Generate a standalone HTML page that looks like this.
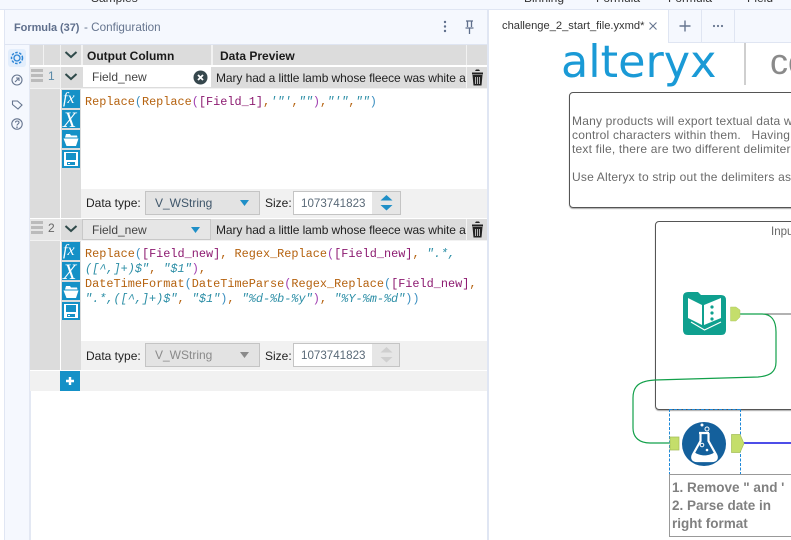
<!DOCTYPE html>
<html><head><meta charset="utf-8"><style>
html,body{margin:0;padding:0;width:791px;height:540px;overflow:hidden;background:#fff;font-family:"Liberation Sans",sans-serif}
.a{position:absolute}
.t{position:absolute;white-space:nowrap;font-size:12px;line-height:16px;color:#333}
.code{position:absolute;white-space:pre;font-family:"Liberation Mono",monospace;font-size:11.87px;line-height:15px;left:85px;color:#b5620f}
.code i{color:#2c8ea6}.code b{font-weight:normal;color:#8c1a70}.code u{text-decoration:none;color:#3b8fc0}.code s{text-decoration:none;color:#a03fb0}
.ib{position:absolute;left:62px;width:18px;height:18px;background:#1591c7}
.bar{position:absolute;left:31px;width:12px;height:3px;background:#bbb}
.fx{position:absolute;left:63px;white-space:nowrap;font:italic 16px/18px "Liberation Serif",serif;color:#fff}
.xx{position:absolute;left:63px;white-space:nowrap;font:italic 22px/19px "Liberation Serif",serif;color:#fff}
</style></head><body>
<div class="a" style="left:0;top:0;width:791px;height:9px;background:#f5f8fe;overflow:hidden">
<div class="t" style="left:91px;top:-10px">Samples</div><div class="t" style="left:524px;top:-10px">Binning</div><div class="t" style="left:596px;top:-10px">Formula</div><div class="t" style="left:668px;top:-10px">Formula</div><div class="t" style="left:747px;top:-10px">Field</div></div>
<div class="a" style="left:0;top:9px;width:791px;height:1px;background:#e0e6f3"></div>
<div class="a" style="left:4px;top:10px;width:1px;height:530px;background:#e0e6f3"></div>
<div class="a" style="left:5px;top:10px;width:482px;height:34px;background:#f5f8fe"></div>
<div class="a" style="left:5px;top:44px;width:482px;height:1px;background:#dfe5f2"></div>
<div class="a" style="left:5px;top:45px;width:24px;height:495px;background:#f5f8fe"></div>
<div class="a" style="left:29px;top:45px;width:1px;height:495px;background:#e3e8f3"></div>
<div class="a" style="left:487px;top:10px;width:2px;height:530px;background:#e0e6f3"></div>
<div class="t" style="left:14px;top:20px;font-weight:bold;font-size:11px;letter-spacing:-.05px;color:#5f6f8c">Formula (37)</div>
<div class="t" style="left:84px;top:20px;color:#66758f;font-size:11.7px">- Configuration</div>
<svg class="a" style="left:440px;top:18px" width="40" height="18"><g fill="#5f6f8c"><circle cx="5" cy="4" r="1.2"/><circle cx="5" cy="8.500" r="1.2"/><circle cx="5" cy="13" r="1.2"/></g><path d="M26 3h7M27.500 3v6M31.500 3v6M25.500 10h8M29.500 10v6" stroke="#5f6f8c" stroke-width="1.300" fill="none"/></svg>
<div class="a" style="left:8px;top:49px;width:18px;height:18px;background:#e3eefc;border-radius:3px"></div>
<svg class="a" style="left:8px;top:49px" width="18" height="90" fill="none"><circle cx="9" cy="9" r="3" stroke="#2e86d6" stroke-width="1.300"/><circle cx="9" cy="9" r="5.500" stroke="#2e86d6" stroke-width="1.500" stroke-dasharray="2.500 1.500"/>
<g stroke="#66758f" stroke-width="1.100"><circle cx="9" cy="31" r="5"/><path d="M7 33l4-4M8 29h3v3"/><path d="M4.500 52h5l4.500 4-4 4-5.500-4.500z"/><circle cx="9" cy="75" r="5.200"/><path d="M7.500 73.500c0-2 3.500-2 3.500 0 0 1.500-2 1.300-2 3"/></g><circle cx="9" cy="78.200" r=".8" fill="#66758f"/></svg>

<!-- grid -->
<div class="a" style="left:30px;top:45px;width:457px;height:20px;background:#dcdcdc"></div>
<div class="a" style="left:43px;top:45px;width:1px;height:20px;background:#f2f2f2"></div>
<div class="a" style="left:60px;top:45px;width:1px;height:20px;background:#f2f2f2"></div>
<div class="a" style="left:81px;top:45px;width:2px;height:20px;background:#f2f2f2"></div>
<div class="a" style="left:211px;top:45px;width:2px;height:20px;background:#f2f2f2"></div>
<div class="a" style="left:466px;top:45px;width:1px;height:20px;background:#f2f2f2"></div>
<div class="t" style="left:87px;top:48px;font-weight:bold;font-size:12px;color:#1a1a1a">Output Column</div>
<div class="t" style="left:220px;top:48px;font-weight:bold;font-size:12px;color:#1a1a1a">Data Preview</div>
<svg class="a" style="left:61px;top:50px" width="20" height="10"><path d="M4.500 2l5.500 5 5.500-5" stroke="#2f4a4a" stroke-width="2" fill="none"/></svg>

<!-- row1 -->
<div class="a" style="left:30px;top:67px;width:457px;height:21px;background:#dcdcdc"></div>
<div class="a" style="left:30px;top:67px;width:30px;height:21px;background:#e6e6e6"></div>
<div class="bar" style="top:69px"></div><div class="bar" style="top:74px"></div><div class="bar" style="top:79px"></div>
<div class="t" style="left:48px;top:68px;color:#5a8aa8">1</div>
<div class="a" style="left:60px;top:67px;width:1px;height:21px;background:#f2f2f2"></div>
<svg class="a" style="left:61px;top:72px" width="20" height="10"><path d="M4.500 2l5.500 5 5.500-5" stroke="#2f4a4a" stroke-width="2" fill="none"/></svg>
<div class="a" style="left:83px;top:67px;width:128px;height:20px;background:#fff"></div>
<div class="t" style="left:92px;top:69px;color:#444;font-size:12px">Field_new</div>
<svg class="a" style="left:193px;top:70px" width="15" height="15"><circle cx="7.500" cy="7.500" r="7" fill="#36474d"/><path d="M5 5l5 5M10 5l-5 5" stroke="#fff" stroke-width="1.800"/></svg>
<div class="t pv" style="left:216px;top:70px;color:#222;width:250px;overflow:hidden;font-size:12px;letter-spacing:-.08px">Mary had a little lamb whose fleece was white a</div>
<div class="a" style="left:466px;top:67px;width:1px;height:21px;background:#f2f2f2"></div>
<svg class="a" style="left:470px;top:68px" width="15" height="19" fill="#222"><path d="M2 4.500h11v2H2zM5 3l1-1.500h3L10 3z"/><path d="M2.500 7h10l-1 10.500h-8z"/><path d="M5.500 9v7M7.500 9v7M9.500 9v7" stroke="#dcdcdc" stroke-width=".8"/></svg>
<div class="a" style="left:30px;top:88px;width:457px;height:1px;background:#f2f2f2"></div>
<div class="a" style="left:30px;top:89px;width:30px;height:129px;background:#dcdcdc"></div>
<div class="a" style="left:61px;top:89px;width:20px;height:129px;background:#dcdcdc"></div>
<div class="a" style="left:81px;top:189px;width:406px;height:29px;background:#f1f1f1"></div>
<div class="code" style="top:95px">Replace<u>(</u>Replace<s>(</s><b>[Field_1]</b>,<i>'"'</i>,<i>""</i><s>)</s>,<i>"'"</i>,<i>""</i><u>)</u></div>
<div class="t" style="left:86px;top:195px;font-size:12px;color:#222">Data type:</div>
<div class="a" style="left:145px;top:191px;width:113px;height:22px;background:#e3e3e3;border:1px solid #c4c4c4"></div>
<div class="t" style="left:155px;top:195px;color:#3f566a">V_WString</div>
<svg class="a" style="left:239px;top:200px" width="12" height="7"><path d="M1 0h9l-4.500 6z" fill="#1f8fc7"/></svg>
<div class="t" style="left:265px;top:195px;color:#222">Size:</div>
<div class="a" style="left:293px;top:191px;width:106px;height:22px;background:#e6e6e6;border:1px solid #c4c4c4"></div>
<div class="a" style="left:294px;top:192px;width:78px;height:22px;background:#fff"></div>
<div class="t" style="left:301px;top:196px;color:#5a6a78;font-size:11.6px">1073741823</div>
<svg class="a" style="left:379px;top:194px" width="16" height="18"><path d="M1.500 6.500L7.500 1l6 5.500z" fill="#1f8fc7"/><path d="M1.500 11h12l-6 5.500z" fill="#1f8fc7"/></svg>

<!-- row2 -->
<div class="a" style="left:30px;top:219px;width:457px;height:21px;background:#dcdcdc"></div>
<div class="a" style="left:30px;top:219px;width:30px;height:21px;background:#e6e6e6"></div>
<div class="bar" style="top:221px"></div><div class="bar" style="top:226px"></div><div class="bar" style="top:231px"></div>
<div class="t" style="left:48px;top:220px;color:#666">2</div>
<div class="a" style="left:60px;top:219px;width:1px;height:21px;background:#f2f2f2"></div>
<svg class="a" style="left:61px;top:224px" width="20" height="10"><path d="M4.500 2l5.500 5 5.500-5" stroke="#2f4a4a" stroke-width="2" fill="none"/></svg>
<div class="a" style="left:82px;top:219px;width:127px;height:19px;background:#e6e6e6;border:1px solid #c8c8c8"></div>
<div class="t" style="left:92px;top:222px;color:#444">Field_new</div>
<svg class="a" style="left:190px;top:227px" width="12" height="7"><path d="M1 0h9l-4.500 6z" fill="#1f8fc7"/></svg>
<div class="t pv" style="left:216px;top:222px;color:#222;width:250px;overflow:hidden;letter-spacing:-.08px">Mary had a little lamb whose fleece was white a</div>
<div class="a" style="left:466px;top:219px;width:1px;height:21px;background:#f2f2f2"></div>
<svg class="a" style="left:470px;top:220px" width="15" height="19" fill="#222"><path d="M2 4.500h11v2H2zM5 3l1-1.500h3L10 3z"/><path d="M2.500 7h10l-1 10.500h-8z"/><path d="M5.500 9v7M7.500 9v7M9.500 9v7" stroke="#dcdcdc" stroke-width=".8"/></svg>
<div class="a" style="left:30px;top:240px;width:457px;height:1px;background:#f2f2f2"></div>
<div class="a" style="left:30px;top:241px;width:30px;height:129px;background:#dcdcdc"></div>
<div class="a" style="left:61px;top:241px;width:20px;height:129px;background:#dcdcdc"></div>
<div class="a" style="left:81px;top:341px;width:406px;height:29px;background:#f1f1f1"></div>
<div class="code" style="top:247px">Replace<u>(</u><b>[Field_new]</b>, Regex_Replace<s>(</s><b>[Field_new]</b>, <i>".*,</i>
<i>([^,]+)$"</i>, <i>"$1"</i><s>)</s>,
DateTimeFormat<u>(</u>DateTimeParse<s>(</s>Regex_Replace<u>(</u><b>[Field_new]</b>,
<i>".*,([^,]+)$"</i>, <i>"$1"</i><u>)</u>, <i>"%d-%b-%y"</i><s>)</s>, <i>"%Y-%m-%d"</i><u>))</u></div>
<div class="t" style="left:86px;top:348px;color:#222">Data type:</div>
<div class="a" style="left:145px;top:343px;width:113px;height:22px;background:#e3e3e3;border:1px solid #c4c4c4"></div>
<div class="t" style="left:155px;top:347px;color:#8a8a8a">V_WString</div>
<svg class="a" style="left:239px;top:352px" width="12" height="7"><path d="M1 0h9l-4.500 6z" fill="#8a8a8a"/></svg>
<div class="t" style="left:265px;top:348px;color:#222">Size:</div>
<div class="a" style="left:293px;top:343px;width:105px;height:22px;background:#e6e6e6;border:1px solid #c4c4c4"></div>
<div class="a" style="left:294px;top:344px;width:78px;height:22px;background:#fff"></div>
<div class="t" style="left:301px;top:348px;color:#5a6a78;font-size:11.6px">1073741823</div>
<svg class="a" style="left:379px;top:346px" width="16" height="18"><path d="M1.500 6.500L7.500 1l6 5.500z" fill="#cfcfcf"/><path d="M1.500 11h12l-6 5.500z" fill="#cfcfcf"/></svg>

<div class="a" style="left:30px;top:371px;width:457px;height:20px;background:#f1f1f1"></div>
<div class="a" style="left:60px;top:371px;width:20px;height:20px;background:#1591c7"></div>
<svg class="a" style="left:60px;top:371px" width="20" height="20"><path d="M10 6v8M6 10h8" stroke="#fff" stroke-width="2.400"/></svg>
<div class="a" style="left:30px;top:391px;width:1px;height:149px;background:#e3e8f3"></div>

<!-- icon buttons -->
<div class="ib" style="top:90px"></div><div class="ib" style="top:110px"></div><div class="ib" style="top:130px"></div><div class="ib" style="top:150px"></div>
<div class="ib" style="top:242px"></div><div class="ib" style="top:262px"></div><div class="ib" style="top:282px"></div><div class="ib" style="top:302px"></div>
<div class="fx" style="top:90px">fx</div>
<div class="fx" style="top:242px">fx</div>
<div class="xx" style="top:110px">X</div>
<div class="xx" style="top:262px">X</div>
<svg class="a" style="left:62px;top:130px" width="18" height="18"><path d="M3 7.500L4 4h4l1 1.500h6l.5 2zM1.500 8.500h15L14 16H4.500z" fill="#fff"/></svg>
<svg class="a" style="left:62px;top:282px" width="18" height="18"><path d="M3 7.500L4 4h4l1 1.500h6l.5 2zM1.500 8.500h15L14 16H4.500z" fill="#fff"/></svg>
<svg class="a" style="left:62px;top:150px" width="18" height="18"><path d="M2 2h14v14H2z" fill="#fff"/><path d="M4 3h10v7H4z" fill="#1591c7"/><path d="M5 12h8v3H5z" fill="#1591c7"/><path d="M6 13h2v1H6z" fill="#fff"/></svg>
<svg class="a" style="left:62px;top:302px" width="18" height="18"><path d="M2 2h14v14H2z" fill="#fff"/><path d="M4 3h10v7H4z" fill="#1591c7"/><path d="M5 12h8v3H5z" fill="#1591c7"/><path d="M6 13h2v1H6z" fill="#fff"/></svg>

<!-- tabs -->
<div class="t" style="left:502px;top:18px;font-size:11.15px;color:#333">challenge_2_start_file.yxmd*</div>
<svg class="a" style="left:648px;top:21px" width="10" height="10"><path d="M1.500 1.500l7 7M8.500 1.500l-7 7" stroke="#66758f" stroke-width="1.100"/></svg>
<div class="a" style="left:668px;top:10px;width:123px;height:33px;background:#f5f8fe"></div>
<div class="a" style="left:668px;top:10px;width:1px;height:33px;background:#dfe5f2"></div>
<div class="a" style="left:701px;top:10px;width:1px;height:33px;background:#dfe5f2"></div>
<div class="a" style="left:734px;top:10px;width:1px;height:33px;background:#dfe5f2"></div>
<div class="a" style="left:668px;top:42px;width:123px;height:1px;background:#dfe5f2"></div>
<svg class="a" style="left:675px;top:18px" width="60" height="16"><path d="M10 2.500v11M4.500 8h11" stroke="#66758f" stroke-width="1.400"/><g fill="#66758f"><circle cx="39" cy="8" r="1.100"/><circle cx="43" cy="8" r="1.100"/><circle cx="47" cy="8" r="1.100"/></g></svg>

<!-- canvas -->
<div class="t" style="left:561px;top:41px;font-family:'DejaVu Sans',sans-serif;font-size:44.5px;line-height:44px;color:#1a9ad6">alteryx</div>
<div class="a" style="left:744px;top:43px;width:2px;height:42px;background:#cfcfcf"></div>
<div class="t" style="left:770px;top:40px;font-size:36px;line-height:44px;color:#8a8a8a">co</div>
<div class="a" style="left:569px;top:92px;width:240px;height:114px;border:1px solid #555;border-radius:4px;box-shadow:0 1px 1px #aaa"></div>
<div class="t" style="left:572px;top:114px;font-size:12px;letter-spacing:.2px;line-height:14px;color:#6a6a6a;white-space:pre">Many products will export textual data with
control characters within them.   Having
text file, there are two different delimiters

Use Alteryx to strip out the delimiters as</div>
<div class="a" style="left:655px;top:221px;width:160px;height:187px;border:1px solid #555;border-radius:4px;box-shadow:0 1px 1px #aaa"></div>
<div class="t" style="left:771px;top:224px;font-size:11.500px;color:#666">Input</div>

<svg class="a" style="left:0;top:0" width="791" height="540" fill="none">
<path d="M758 314H791" stroke="#666" stroke-width="1"/>
<path d="M738 314H762C771 314 776 320 776 332V362C776 372 770 376 758 377L655 380C639 381 633 386 633 398V428C633 438 640 443 650 443H670" stroke="#12a04a" stroke-width="1.200"/>
<!-- book tool -->
<path d="M683 297Q683 292 688 292H698L701 295H721Q726 295 726 300V330Q726 335 721 335H688Q683 335 683 330Z" fill="#0fa08f"/>
<path d="M688 298L702 305V325L688 318ZM721 298L704 305V325L721 318Z" fill="#fff"/>
<path d="M691 322L704.500 330 721 322" stroke="#fff" stroke-width="1.200"/>
<g fill="#0fa08f"><circle cx="712" cy="307" r="1.600"/><circle cx="712" cy="313" r="1.600"/><circle cx="712" cy="319" r="1.600"/></g>
<path d="M730.500 307H736L740 310V317L736 321H730.500Z" fill="#c4de6b" stroke="#b0c86a" stroke-width=".5"/>
<!-- selection -->
<path d="M669.500 409V475M740.500 409V475M669.500 409.500H741" stroke="#1e88d8" stroke-width="1" stroke-dasharray="3 1.500"/>
<!-- formula tool -->
<path d="M744 443H791" stroke="#1212e0" stroke-width="1.600"/>
<path d="M670 437H679V450H670Z" fill="#c4de6b" stroke="#a5bf5a" stroke-width=".7"/>
<circle cx="704" cy="444" r="22" fill="#14609c"/>
<path d="M699 433H709M700.500 433V441L693 454.500C691 458.500 693 461 697 461H712C716 461 718 458.500 716 454.500L708.500 441V433" stroke="#fff" stroke-width="2.200"/>
<path d="M694 452C700 456.500 709 456.500 715 452L716.500 458 713 461H696L692.500 458Z" fill="#fff"/>
<circle cx="702" cy="425" r="1.500" fill="#fff"/><circle cx="707" cy="429" r="2" stroke="#fff"/>
<circle cx="702" cy="445" r="1.800" stroke="#fff"/><circle cx="707" cy="450" r="1.300" fill="#fff"/>
<path d="M731.500 434.500H740L744 443.500 740 452.500H731.500Z" fill="#c4de6b" stroke="#a5bf5a" stroke-width=".7"/>
</svg>
<div class="a" style="left:669px;top:474px;width:140px;height:61px;border:1px solid #999"></div>
<div class="t" style="left:672px;top:479px;font-weight:bold;font-size:13.5px;line-height:18px;color:#808080;white-space:pre">1. Remove " and '
2. Parse date in
right format</div>
</body></html>
